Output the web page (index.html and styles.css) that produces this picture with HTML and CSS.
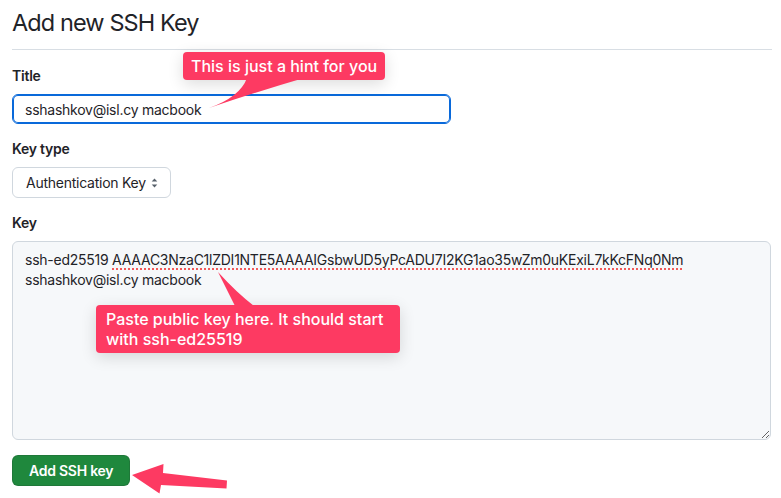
FILE: index.html
```html
<!DOCTYPE html>
<html lang="en">
<head>
<meta charset="utf-8">
<title>Add new SSH Key</title>
<link rel="stylesheet" href="styles.css">
</head>
<body>
<main class="page">
  <h1 class="heading">Add new SSH Key</h1>
  <form class="form">
    <div class="group">
      <label class="label" for="title">Title</label>
      <input id="title" class="input input--focus" type="text" value="sshashkov@isl.cy macbook">
    </div>
    <div class="group">
      <label class="label">Key type</label>
      <div class="select">
        <span>Authentication Key</span>
        <svg class="select-caret" width="7" height="10" viewBox="0 0 7 10"><path d="M3.5 0.5 L6.3 3.6 H0.7 Z M3.5 9.5 L6.3 6.4 H0.7 Z" fill="#57606a"/></svg>
      </div>
    </div>
    <div class="group">
      <label class="label">Key</label>
      <div class="textarea">ssh-ed25519 <span class="misspelled">AAAAC3NzaC1lZDI1NTE5AAAAIGsbwUD5yPcADU7I2KG1ao35wZm0uKExiL7kKcFNq0Nm</span><br>sshashkov@isl.cy macbook</div>
    </div>
    <button class="btn" type="button">Add SSH key</button>
  </form>

  <div class="hint hint--title">This is just a hint for you</div>
  <div class="hint hint--key">Paste public key here. It should start<br>with ssh-ed25519</div>

  <svg class="annotations" width="781" height="498" viewBox="0 0 781 498">
    <path d="M247 78 Q 240 97 209 108 Q 256 92 304 78 Z" fill="#fd3a62"/>
    <path d="M218 272 L235 306 L254 306 Q 236 292 218 272 Z" fill="#fd3a62"/>
    <path d="M132 475 L163.5 464 L163 473 L227 480.5 L226.5 488.5 L161 485 L159.5 493.5 Z" fill="#fd3a62"/>
  </svg>
</main>
</body>
</html>
```

FILE: styles.css
```css
* { box-sizing: border-box; }

html, body {
  margin: 0;
  background: #ffffff;
}

body {
  font-family: Inter, "Noto Sans", "Liberation Sans", sans-serif;
  color: #1f2328;
  font-size: 14px;
  letter-spacing: -0.25px;
}

.page {
  position: relative;
  width: 781px;
  height: 498px;
  padding: 5px 10px 0 12px;
  overflow: hidden;
}

.heading {
  margin: 0 -1px 0 0;
  font-size: 23.5px;
  letter-spacing: -0.9px;
  line-height: 36px;
  font-weight: 400;
  padding-bottom: 8px;
  border-bottom: 1px solid #d8dee4;
}

.form {
  margin-top: 16px;
}

.group {
  margin-bottom: 15px;
}

.label {
  display: block;
  font-weight: 600;
  font-size: 14px;
  line-height: 20px;
  margin-bottom: 8px;
}

.input {
  display: block;
  width: 439px;
  height: 30px;
  padding: 0 12px;
  font: inherit;
  font-size: 14px;
  letter-spacing: -0.25px;
  color: #1f2328;
  border: 1px solid #d0d7de;
  border-radius: 6px;
  background: #ffffff;
  outline: none;
}

.input--focus {
  border-color: #0969da;
  box-shadow: inset 0 0 0 1px #0969da;
}

.select {
  display: flex;
  align-items: center;
  justify-content: space-between;
  width: 159px;
  height: 31px;
  padding: 0 12px 0 13px;
  border: 1px solid #d0d7de;
  border-radius: 6px;
  background: #ffffff;
  font-size: 14px;
}

.select-caret {
  display: block;
}

.textarea {
  width: 759px;
  height: 199px;
  padding: 8px 12px;
  border: 1px solid #d0d7de;
  border-radius: 6px;
  background: #f6f8fa;
  font-size: 14px;
  line-height: 20px;
  resize: vertical;
  overflow: auto;
}

.misspelled {
  text-decoration-line: underline;
  text-decoration-style: dotted;
  text-decoration-color: #f25a5a;
  text-decoration-thickness: 1.5px;
  text-underline-offset: 3px;
}

.btn {
  display: block;
  height: 31px;
  padding: 0 16px;
  font: inherit;
  font-size: 14px;
  font-weight: 600;
  letter-spacing: -0.25px;
  color: #ffffff;
  background: #1f883d;
  border: 1px solid rgba(31, 35, 40, 0.15);
  border-radius: 6px;
}

.hint {
  position: absolute;
  background: #fd3a62;
  color: #ffffff;
  font-size: 16px;
  font-weight: 500;
  letter-spacing: 0;
  line-height: 20px;
  border-radius: 4px;
  box-shadow: 0 4px 16px rgba(0, 0, 0, 0.14);
}

.hint--title {
  left: 183px;
  top: 52px;
  width: 202px;
  padding: 4px 8px;
  white-space: nowrap;
}

.hint--key {
  left: 96px;
  top: 305px;
  width: 304px;
  padding: 4px 10px;
  white-space: nowrap;
}

.annotations {
  position: absolute;
  left: 0;
  top: 0;
  pointer-events: none;
}
```
